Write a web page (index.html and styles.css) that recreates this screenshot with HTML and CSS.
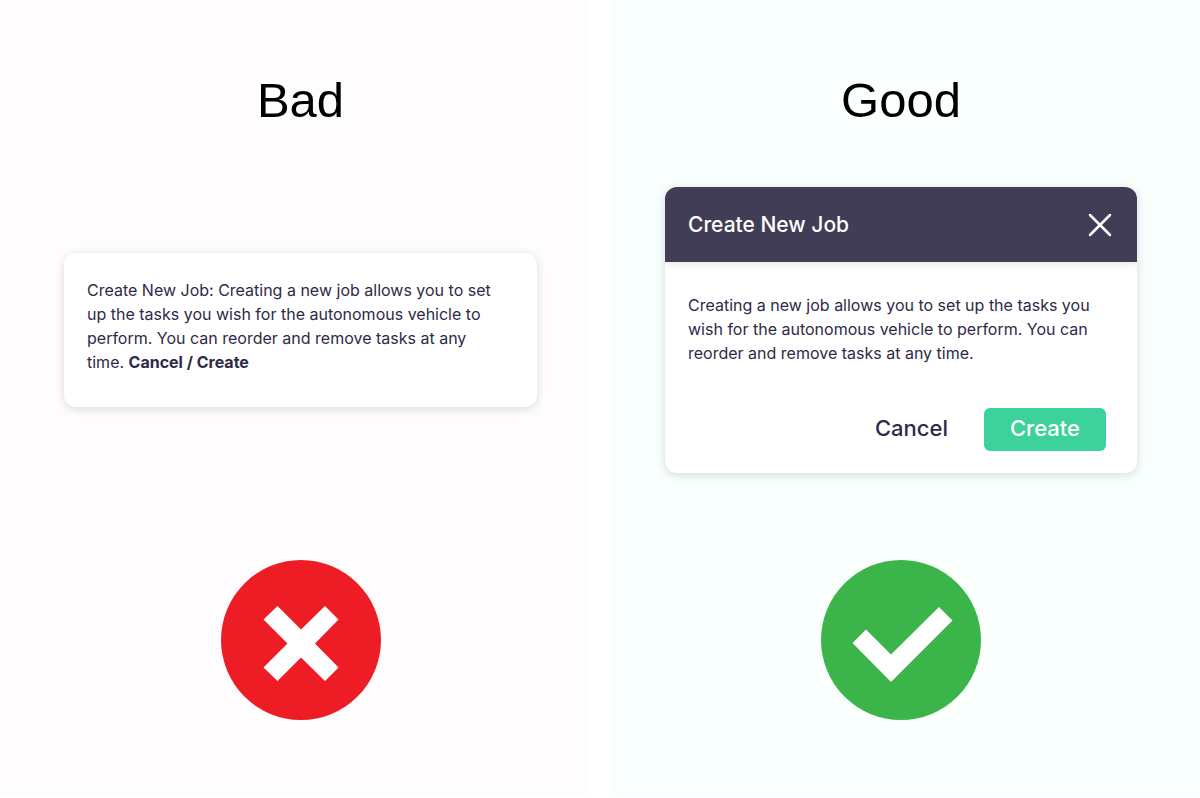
FILE: index.html
```html
<!DOCTYPE html>
<html lang="en">
<head>
    <meta charset="UTF-8">
    <meta name="viewport" content="width=device-width, initial-scale=1.0">
    <title>Bad vs Good Dialog</title>
    <link rel="stylesheet" href="styles.css">
</head>
<body>
    <main class="comparison">
        <section class="panel panel-bad">
            <h1>Bad</h1>
            <div class="example">
                <div class="card notice">
                    <p>Create New Job: Creating a new job allows you to set up the tasks you wish for the autonomous vehicle to perform. You can reorder and remove tasks at any time. <strong>Cancel / Create</strong></p>
                </div>
            </div>
            <svg class="verdict" viewBox="0 0 160 160" role="img" aria-label="Bad example">
                <circle cx="80" cy="80" r="80" fill="#ee1d25"/>
                <path d="M56.5 46 L80 69.5 L104 46 L117.5 59.5 L94 83.5 L117.5 107.5 L104 121 L80 97.5 L56.5 121 L42.5 107.5 L66.5 83.5 L42.5 59.5 Z" fill="#fff"/>
            </svg>
        </section>
        <section class="panel panel-good">
            <h1>Good</h1>
            <div class="example">
                <div class="card dialog" role="dialog" aria-labelledby="dialog-title">
                    <div class="dialog-header">
                        <h2 id="dialog-title">Create New Job</h2>
                        <button type="button" class="btn-close" aria-label="Close">
                            <svg viewBox="0 0 24 24" width="24" height="24">
                                <path d="M2 2 L22 22 M22 2 L2 22" stroke="#fff" stroke-width="2.5" stroke-linecap="round" fill="none"/>
                            </svg>
                        </button>
                    </div>
                    <div class="dialog-body">
                        <p>Creating a new job allows you to set up the tasks you wish for the autonomous vehicle to perform. You can reorder and remove tasks at any time.</p>
                    </div>
                    <div class="dialog-actions">
                        <button type="button" class="btn btn-cancel">Cancel</button>
                        <button type="button" class="btn btn-create">Create</button>
                    </div>
                </div>
            </div>
            <svg class="verdict" viewBox="0 0 160 160" role="img" aria-label="Good example">
                <circle cx="80" cy="80" r="80" fill="#3bb54a"/>
                <path d="M45 69.5 L70 94.5 L118 47 L131.5 60.5 L70 122 L31.5 83 Z" fill="#fff"/>
            </svg>
        </section>
    </main>
</body>
</html>
```
FILE: styles.css
```css
* {
    box-sizing: border-box;
}

body {
    font-family: Inter, "Liberation Sans", sans-serif;
    margin: 0;
    background-color: #fff;
    color: #2e2a47;
}

h1, h2, p {
    margin: 0;
}

.comparison {
    display: grid;
    grid-template-columns: 1fr 1fr;
    gap: 20px;
    min-height: 100vh;
    padding-bottom: 1px;
}

.panel {
    display: flex;
    flex-direction: column;
    align-items: center;
    padding-top: 72px;
    padding-bottom: 77px;
}

.panel-bad {
    background-color: #fffcfd;
    padding-left: 64px;
    padding-right: 53px;
}

.panel-good {
    background-color: #f8fffd;
    padding-left: 55px;
    padding-right: 63px;
}

h1 {
    font-family: "Liberation Sans", Arial, sans-serif;
    font-size: 49px;
    font-weight: normal;
    line-height: 56px;
    color: #000;
}

.example {
    flex: 1;
    width: 100%;
    display: flex;
    flex-direction: column;
    justify-content: center;
    padding: 28px 0 56px;
}

.card {
    background-color: #fff;
    border-radius: 12px;
    box-shadow: 0 2px 10px rgba(40, 30, 60, 0.16);
    font-size: 16px;
    line-height: 24px;
}

.notice {
    padding: 25px 23px 33px;
}

.notice p {
    padding-right: 8px;
}

.dialog {
    overflow: hidden;
}

.dialog-header {
    display: flex;
    justify-content: space-between;
    align-items: center;
    height: 75px;
    padding: 0 25px 0 23px;
    background-color: #413d56;
    box-shadow: 0 2px 8px rgba(0, 0, 0, 0.1);
}

.dialog-header h2 {
    font-size: 21px;
    font-weight: 500;
    color: #fff;
}

.btn-close {
    display: flex;
    padding: 0;
    border: none;
    background: none;
    cursor: pointer;
}

.dialog-body {
    padding: 31px 23px 43px;
}

.dialog-actions {
    display: flex;
    justify-content: flex-end;
    gap: 10px;
    padding: 0 31px 22px;
}

.btn {
    height: 43px;
    padding: 0 26px 3px;
    border: none;
    border-radius: 6px;
    font-family: inherit;
    font-size: 22px;
    font-weight: 500;
    line-height: 24px;
    cursor: pointer;
}

.btn-cancel {
    background: none;
    color: #2e2a47;
}

.btn-create {
    background-color: #3dd19c;
    color: #fff;
}

.verdict {
    width: 160px;
    height: 160px;
}
```
